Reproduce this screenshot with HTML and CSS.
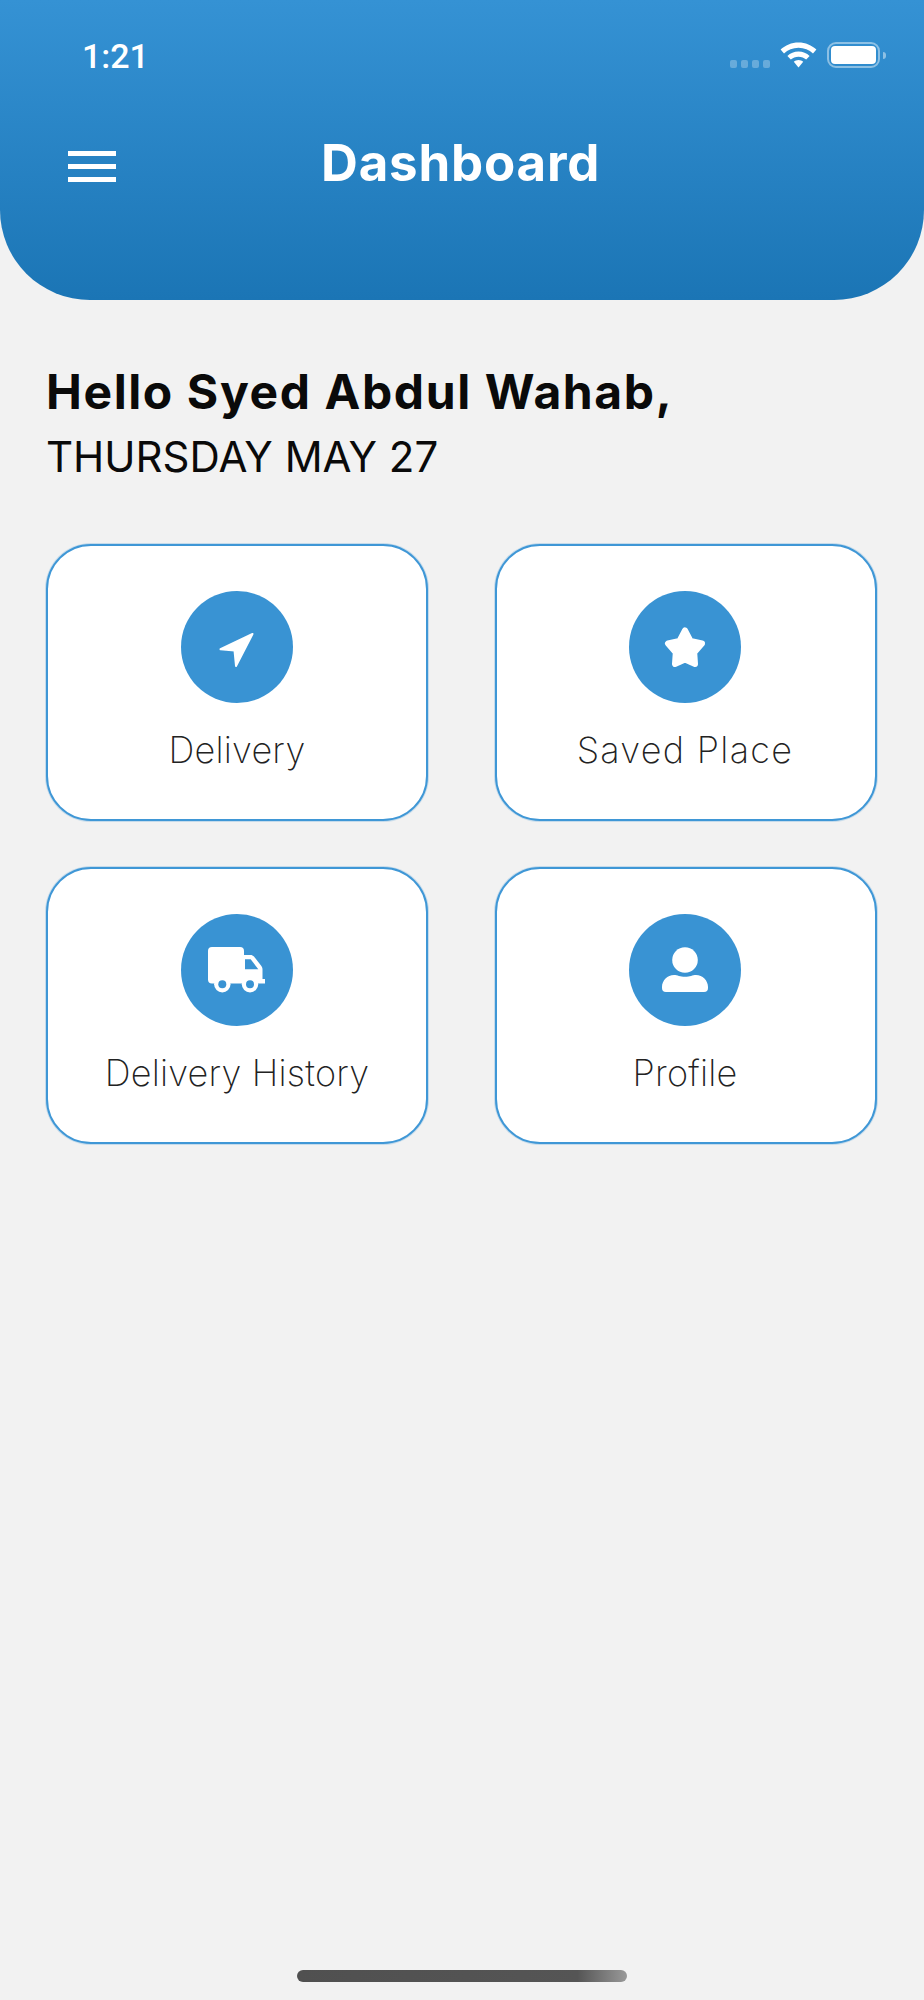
FILE: index.html
```html
<!DOCTYPE html>
<html lang="en">
<head>
<meta charset="utf-8">
<title>Dashboard</title>
<link rel="stylesheet" href="styles.css">
</head>
<body>
<div class="page">
  <header class="header">
    <div class="status">
      <span class="time">1:21</span>
      <div class="status-icons">
        <div class="signal"><i></i><i></i><i></i><i></i></div>
        <svg class="wifi" viewBox="0 0 37 26" width="37" height="26">
          <path d="M18.5 0.5C11.5 0.5 5.3 3.2 0.6 7.6L4 11.4C7.8 7.9 12.9 5.7 18.5 5.7S29.2 7.9 33 11.4L36.4 7.6C31.7 3.2 25.5 0.5 18.5 0.5Z" fill="#fff"/>
          <path d="M18.5 9.5C14.2 9.5 10.3 11.2 7.4 13.9L10.8 17.6C12.8 15.8 15.5 14.7 18.5 14.7S24.2 15.8 26.2 17.6L29.6 13.9C26.7 11.2 22.8 9.5 18.5 9.5Z" fill="#fff"/>
          <path d="M18.5 18C16.7 18 15 18.7 13.8 19.8L18.5 25.5L23.2 19.8C22 18.7 20.3 18 18.5 18Z" fill="#fff"/>
        </svg>
        <div class="battery"><span class="battery-fill"></span></div>
        <span class="battery-nub"></span>
      </div>
    </div>
    <div class="toolbar">
      <div class="menu"><span></span><span></span><span></span></div>
      <h1 class="title">Dashboard</h1>
    </div>
  </header>

  <main class="content">
    <h2 class="hello">Hello Syed Abdul Wahab,</h2>
    <p class="date">THURSDAY MAY 27</p>

    <div class="grid">
      <div class="card">
        <div class="badge">
          <svg viewBox="0 0 112 112" width="112" height="112">
            <path d="M71.5 43L39.5 58.2L53.5 59.5L55 75Z" fill="#fff" stroke="#fff" stroke-width="2" stroke-linejoin="round"/>
          </svg>
        </div>
        <span class="label">Delivery</span>
      </div>
      <div class="card">
        <div class="badge">
          <svg viewBox="0 0 112 112" width="112" height="112">
            <path d="M56 39.5L61.5 50L73 52.5L65.2 61.5L66 73L56 68.6L46 73L46.8 61.5L39 52.5L50.5 50Z" fill="#fff" stroke="#fff" stroke-width="6" stroke-linejoin="round"/>
          </svg>
        </div>
        <span class="label label-wide">Saved Place</span>
      </div>
      <div class="card">
        <div class="badge">
          <svg viewBox="0 0 112 112" width="112" height="112">
            <path d="M31 33H59A4 4 0 0 1 63 37V41H69.5C71 41 72 41.6 73 42.6L80 51.5C81 52.8 81.5 54 81.5 55.5V65H84V69.5H31A4 4 0 0 1 27 65.5V37A4 4 0 0 1 31 33Z" fill="#fff"/>
            <path d="M64 45.3H69.7L77.3 55.3H64Z" fill="#3993d3"/>
            <circle cx="41.3" cy="70.3" r="8.2" fill="#fff"/>
            <circle cx="69" cy="70.3" r="8.2" fill="#fff"/>
            <circle cx="41.3" cy="70.3" r="4" fill="#3993d3"/>
            <circle cx="69" cy="70.3" r="4" fill="#3993d3"/>
          </svg>
        </div>
        <span class="label">Delivery History</span>
      </div>
      <div class="card">
        <div class="badge">
          <svg viewBox="0 0 112 112" width="112" height="112">
            <circle cx="56" cy="46" r="12.8" fill="#fff"/>
            <path d="M45 61C48.5 61 51 62.8 56 62.8S63.5 61 67 61C73.5 61 79 66.5 79 73V74A4 4 0 0 1 75 78H37A4 4 0 0 1 33 74V73C33 66.5 38.5 61 45 61Z" fill="#fff"/>
          </svg>
        </div>
        <span class="label">Profile</span>
      </div>
    </div>
  </main>

  <div class="home-indicator"></div>
</div>
</body>
</html>
```

FILE: styles.css
```css
* { box-sizing: border-box; }

html, body {
  margin: 0;
  padding: 0;
  background: #f2f2f2;
}

.page {
  width: 924px;
  height: 2000px;
  display: flex;
  flex-direction: column;
  font-family: Inter, "Liberation Sans", sans-serif;
  overflow: hidden;
}

.header {
  height: 300px;
  flex: none;
  background: linear-gradient(#3592d4, #1b75b5);
  border-radius: 0 0 90px 90px;
  color: #fff;
}

.status {
  height: 42px;
  margin-top: 42px;
  padding: 0 38px 0 82px;
  display: flex;
  justify-content: space-between;
  align-items: flex-start;
}

.time {
  font-family: Roboto, sans-serif;
  font-size: 34px;
  line-height: 28px;
  font-weight: 500;
}

.status-icons {
  display: flex;
  align-items: center;
  height: 26px;
}

.signal {
  display: flex;
  gap: 4px;
  margin: 18px 10px 0 0;
}

.signal i {
  width: 7px;
  height: 8px;
  border-radius: 2px;
  background: rgba(255, 255, 255, 0.27);
}

.wifi {
  display: block;
  margin-right: 10px;
}

.battery {
  width: 53px;
  height: 26px;
  padding: 2px;
  border: 2px solid rgba(255, 255, 255, 0.45);
  border-radius: 9px;
}

.battery-fill {
  display: block;
  width: 100%;
  height: 100%;
  background: #fff;
  border-radius: 4px;
}

.battery-nub {
  width: 3px;
  height: 7px;
  margin-left: 3px;
  background: rgba(255, 255, 255, 0.45);
  border-radius: 0 3px 3px 0;
}

.toolbar {
  height: 60px;
  margin-top: 49px;
  padding: 0 0 0 68px;
  display: flex;
  align-items: flex-start;
}

.menu {
  width: 48px;
  margin-top: 18px;
  display: flex;
  flex-direction: column;
  gap: 8px;
}

.menu span {
  display: block;
  height: 5px;
  background: #fff;
}

.title {
  margin: 0 0 0 205px;
  font-size: 51px;
  line-height: 60px;
  font-weight: 700;
  letter-spacing: 0.8px;
}

.content {
  padding: 64px 47px 0 46px;
}

.hello {
  margin: 0;
  font-size: 48px;
  line-height: 56px;
  font-weight: 700;
  letter-spacing: 1.6px;
  color: #0a0a0a;
}

.date {
  margin: 11px 0 0;
  font-size: 42px;
  line-height: 52px;
  font-weight: 400;
  color: #0a0a0a;
}

.grid {
  margin-top: 61px;
  display: grid;
  grid-template-columns: 382px 382px;
  grid-auto-rows: 277px;
  column-gap: 67px;
  row-gap: 46px;
}

.card {
  background: #fff;
  border: 2px solid #3f97d6;
  border-radius: 45px;
  box-shadow: 0 0 0 1px rgba(63, 151, 214, 0.25);
  padding: 45px 0 0;
  display: flex;
  flex-direction: column;
  align-items: center;
}

.card:nth-child(even) {
  padding-right: 2px;
}

.badge {
  width: 112px;
  height: 112px;
  border-radius: 50%;
  background: #3993d3;
  flex: none;
}

.badge svg { display: block; }

.label {
  margin-top: 24px;
  font-size: 36px;
  line-height: 46px;
  font-weight: 200;
  letter-spacing: 0.2px;
  color: #222;
}

.label-wide {
  letter-spacing: 1.3px;
}

.home-indicator {
  width: 330px;
  height: 12px;
  flex: none;
  margin: auto auto 18px;
  border-radius: 6px;
  background: linear-gradient(90deg, #505050 0%, #555 85%, #999 100%);
}
```
